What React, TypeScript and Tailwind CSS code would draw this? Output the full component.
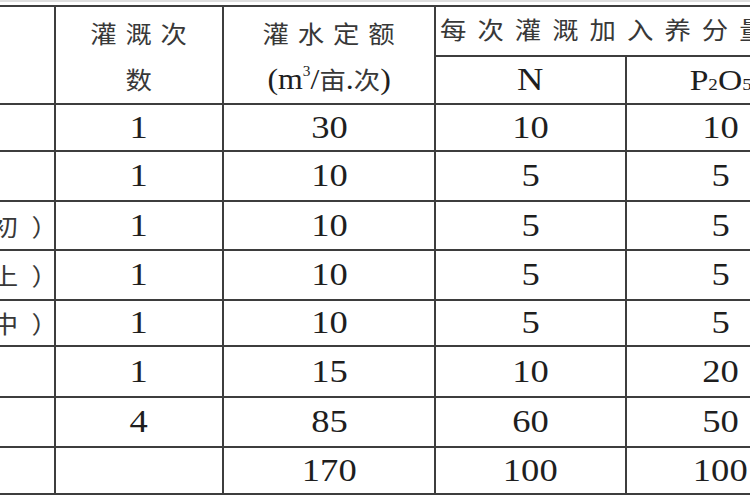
const rows = [
  { label: '', times: '1', water: '30', n: '10', p: '10' },
  { label: '', times: '1', water: '10', n: '5', p: '5' },
  { label: '苗期（初）', times: '1', water: '10', n: '5', p: '5' },
  { label: '蕾期（上）', times: '1', water: '10', n: '5', p: '5' },
  { label: '花期（中）', times: '1', water: '10', n: '5', p: '5' },
  { label: '', times: '1', water: '15', n: '10', p: '20' },
  { label: '', times: '4', water: '85', n: '60', p: '50' },
  { label: '', times: '', water: '170', n: '100', p: '100' },
]

const heights = ['h-[47px]', 'h-[50px]', 'h-[49px]', 'h-[50px]', 'h-[46px]', 'h-[51px]', 'h-[50px]', 'h-[47px]']

const cjkFont = "font-['Noto_Sans_CJK_SC',sans-serif] text-[#383838]"
const serif = "font-['Liberation_Serif',serif] text-[#1e1e1e]"
const cell = 'border-2 border-[#3d3d3d] p-0 text-center align-middle'

function Num({ v }: { v: string }) {
  return <span className={`inline-block scale-x-[1.18] leading-none text-[31px] ${serif}`}>{v}</span>
}

function Han({ t, className = 'tracking-[8px] -mr-[8px]' }: { t: string; className?: string }) {
  return (
    <span className={`inline-block scale-x-[1.1] leading-none text-[24px] ${cjkFont} ${className}`}>{t}</span>
  )
}

export default function App() {
  return (
    <div className="w-[750px] h-[500px] overflow-hidden bg-white border-t-2 border-[#dedede] pt-[3px]">
      <table className="table-fixed border-collapse -ml-[66px] w-[880px]">
        <colgroup>
          <col className="w-[120px]" />
          <col className="w-[168px]" />
          <col className="w-[212px]" />
          <col className="w-[191px]" />
          <col className="w-[189px]" />
        </colgroup>
        <tbody>
          <tr className="h-[50px]">
            <td rowSpan={2} className={cell} />
            <td rowSpan={2} className={cell}>
              <div className="flex flex-col items-center gap-[22px] pt-[2px]">
                <Han t="灌溉次" />
                <Han t="数" />
              </div>
            </td>
            <td rowSpan={2} className={cell}>
              <div className="flex flex-col items-center gap-[20px] pt-[4px]">
                <Han t="灌水定额" />
                <span className="inline-flex items-baseline scale-x-[1.1] leading-none">
                  <span className={`${serif} text-[29px]`}>(m</span>
                  <span className={`${serif} text-[14px] relative -top-[13px]`}>3</span>
                  <span className={`${serif} text-[29px]`}>/</span>
                  <span className={`${cjkFont} text-[24px]`}>亩</span>
                  <span className={`${serif} text-[29px]`}>.</span>
                  <span className={`${cjkFont} text-[24px]`}>次</span>
                  <span className={`${serif} text-[29px]`}>)</span>
                </span>
              </div>
            </td>
            <td colSpan={2} className={`${cell} text-left pl-[4px] whitespace-nowrap overflow-hidden`}>
              <Han t="每次灌溉加入养分量（kg/亩）" className="tracking-[10px] origin-left" />
            </td>
          </tr>
          <tr className="h-[48px]">
            <td className={cell}>
              <Num v="N" />
            </td>
            <td className={cell}>
              <span className={`inline-flex items-baseline scale-x-[1.12] leading-none ${serif}`}>
                <span className="text-[30px]">P</span>
                <span className="text-[17px]">2</span>
                <span className="text-[30px]">O</span>
                <span className="text-[17px]">5</span>
              </span>
            </td>
          </tr>
          {rows.map((r, i) => (
            <tr key={i} className={heights[i]}>
              <td className={`${cell} border-l-0 whitespace-nowrap overflow-hidden`}>
                <div className="flex justify-end pr-[4px]">
                  {r.label && <Han t={r.label} className="tracking-[12px] -mr-[12px]" />}
                </div>
              </td>
              <td className={cell}>{r.times && <Num v={r.times} />}</td>
              <td className={cell}>
                <Num v={r.water} />
              </td>
              <td className={cell}>
                <Num v={r.n} />
              </td>
              <td className={cell}>
                <Num v={r.p} />
              </td>
            </tr>
          ))}
        </tbody>
      </table>
    </div>
  )
}
